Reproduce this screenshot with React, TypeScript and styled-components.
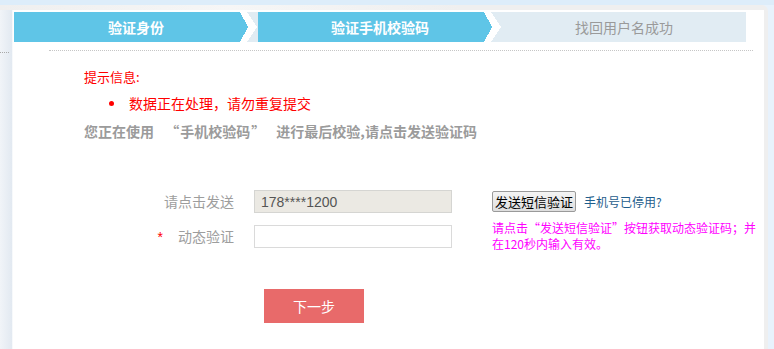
import React from "react";
import styled, { createGlobalStyle } from "styled-components";

const GlobalStyle = createGlobalStyle`
  html, body { margin: 0; padding: 0; }
  body {
    background: #e6f1fc;
    font-family: "Noto Sans CJK SC", "Liberation Sans", sans-serif;
  }
`;

const CJK = `"Noto Sans CJK SC", "Liberation Sans", sans-serif`;

const Page = styled.div`
  width: 774px;
  height: 349px;
  display: flex;
  flex-direction: column;
  background: #e8f2fc;
  overflow: hidden;
`;

const TopStrip = styled.div`
  height: 5px;
  flex: none;
  background: #ddedfa;
`;

const Frame = styled.div`
  flex: 1;
  display: flex;
  margin-right: 6px;
  padding: 5px 4px 0 0;
  background: linear-gradient(to right, #efefef 0%, #f6f6f6 30%, #efefef 60%, #efefef 100%);
  border-top-right-radius: 6px;
  min-height: 0;
`;

const Sidebar = styled.div`
  width: 12px;
  flex: none;
  padding-top: 42px;
  background: linear-gradient(to right, #f1f4f8, #e2e9f1);
  border-right: 1px solid #f7f9fb;
`;

const SideDots = styled.div`
  width: 9px;
  border-top: 1px dotted #a9a9a9;
`;

const Main = styled.div`
  flex: 1;
  background: #fff;
  padding-top: 2px;
  display: flex;
  flex-direction: column;
`;

const StepBar = styled.div`
  margin-left: 1px;
  width: 732px;
  height: 30px;
  display: flex;
  background: #e1ecf3;
`;

const Step = styled.div`
  width: 244px;
  height: 30px;
  display: grid;
  grid-template: 30px / 1fr;
  & > * { grid-area: 1 / 1; }
`;

const StepFill = styled.div`
  background: #5fc5e7;
  margin-right: 18px;
`;

const StepArrow = styled.svg`
  justify-self: end;
  width: 18px;
  height: 30px;
  display: block;
`;

const StepLabel = styled.span<{ $active?: boolean }>`
  place-self: center;
  font-family: ${CJK};
  font-size: 14px;
  line-height: 30px;
  font-weight: ${(p) => (p.$active ? 700 : 400)};
  color: ${(p) => (p.$active ? "#ffffff" : "#9a9a9a")};
`;

const Divider = styled.div`
  margin: 8px 0 0 36px;
  width: 704px;
  border-top: 1px dotted #c6c6c6;
`;

const Content = styled.div`
  padding-left: 71px;
  display: flex;
  flex-direction: column;
  align-items: flex-start;
`;

const TipTitle = styled.div`
  margin-top: 16px;
  font-size: 13px;
  line-height: 20px;
  color: #ff0000;
`;

const TipList = styled.ul`
  margin: 4px 0 0;
  padding: 0;
  list-style: none;
`;

const TipItem = styled.li`
  display: flex;
  align-items: center;
  font-size: 14px;
  line-height: 24px;
  color: #ff0000;
`;

const Bullet = styled.span`
  width: 5px;
  height: 5px;
  border-radius: 50%;
  background: #ff0000;
  margin: 0 15px 0 25px;
`;

const Notice = styled.div`
  margin-top: 4px;
  font-size: 14px;
  line-height: 24px;
  font-weight: 700;
  color: #9b9b9b;
  white-space: nowrap;
`;

/* CJK-style full-width quotation mark: glyph padded out to a full cell */
const Quote = styled.span<{ $open?: boolean }>`
  padding: ${(p) => (p.$open ? "0 1px 0 8px" : "0 8px 0 1px")};
`;

const Form = styled.div`
  margin-top: 47px;
  display: grid;
  grid-template-columns: 150px 198px 270px;
  column-gap: 20px;
  row-gap: 7px;
  align-items: start;
  & > :nth-child(3n) { margin-left: 20px; }
`;

const FieldLabel = styled.div<{ $offset?: number }>`
  margin-top: ${(p) => p.$offset ?? 0}px;
  height: 23px;
  line-height: 23px;
  text-align: right;
  font-size: 14px;
  color: #9d9d9d;
  white-space: nowrap;
`;

const Star = styled.span`
  font-family: "Liberation Sans", Arial, sans-serif;
  font-size: 14px;
  color: #ff0000;
  margin-right: 15px;
`;

const FieldInput = styled.input<{ $offset?: number; $readOnlyLook?: boolean }>`
  box-sizing: border-box;
  margin: ${(p) => p.$offset ?? 0}px 0 0;
  width: 198px;
  height: 23px;
  padding: 0 6px;
  border: 1px solid ${(p) => (p.$readOnlyLook ? "#d5d5d2" : "#dadada")};
  background: ${(p) => (p.$readOnlyLook ? "#ebe9e3" : "#ffffff")};
  font-family: "Liberation Sans", Arial, sans-serif;
  font-size: 14px;
  color: #555;
  outline: none;
  display: block;
`;

const ActionCell = styled.div`
  height: 23px;
  display: flex;
  align-items: center;
`;

const SmsButton = styled.button`
  box-sizing: border-box;
  height: 21px;
  padding: 0 2px;
  border: 1px solid #9a9a9a;
  border-radius: 2px;
  background: linear-gradient(#f4f4f4, #dedede);
  font-family: ${CJK};
  font-size: 13px;
  line-height: 19px;
  color: #000;
  cursor: pointer;
`;

const StoppedLink = styled.a`
  margin-left: 8px;
  font-size: 12px;
  color: #1e5d8c;
  text-decoration: none;
`;

const Hint = styled.div`
  width: 266px;
  font-size: 12px;
  line-height: 16px;
  color: #ff00ff;
`;

const NextButton = styled.button`
  margin: 37px 0 0 180px;
  width: 100px;
  height: 34px;
  border: none;
  background: #e86a6a;
  color: #fff;
  font-family: ${CJK};
  font-size: 14px;
  cursor: pointer;
`;

const Arrow = () => (
  <StepArrow viewBox="0 0 18 30" shapeRendering="crispEdges">
    <polygon points="0,0 8,15 0,30" fill="#5fc5e7" />
    <polygon points="0,0 7,0 17,15 7,30 0,30 8,15" fill="#ffffff" />
  </StepArrow>
);

export default function App() {
  return (
    <>
      <GlobalStyle />
      <Page>
        <TopStrip />
        <Frame>
          <Sidebar>
            <SideDots />
          </Sidebar>
          <Main>
            <StepBar>
              <Step>
                <StepFill />
                <Arrow />
                <StepLabel $active>验证身份</StepLabel>
              </Step>
              <Step>
                <StepFill />
                <Arrow />
                <StepLabel $active>验证手机校验码</StepLabel>
              </Step>
              <Step>
                <StepLabel>找回用户名成功</StepLabel>
              </Step>
            </StepBar>
            <Divider />
            <Content>
              <TipTitle>提示信息:</TipTitle>
              <TipList>
                <TipItem>
                  <Bullet />
                  数据正在处理，请勿重复提交
                </TipItem>
              </TipList>
              <Notice>
                您正在使用 <Quote $open>“</Quote>手机校验码<Quote>”</Quote> 进行最后校验,请点击发送验证码
              </Notice>
              <Form>
                <FieldLabel>请点击发送</FieldLabel>
                <FieldInput $readOnlyLook readOnly defaultValue="178****1200" />
                <ActionCell>
                  <SmsButton type="button">发送短信验证</SmsButton>
                  <StoppedLink href="#">手机号已停用?</StoppedLink>
                </ActionCell>

                <FieldLabel $offset={5}>
                  <Star>*</Star>动态验证
                </FieldLabel>
                <FieldInput $offset={5} />
                <Hint>请点击“发送短信验证”按钮获取动态验证码；并在120秒内输入有效。</Hint>
              </Form>
              <NextButton type="button">下一步</NextButton>
            </Content>
          </Main>
        </Frame>
      </Page>
    </>
  );
}
